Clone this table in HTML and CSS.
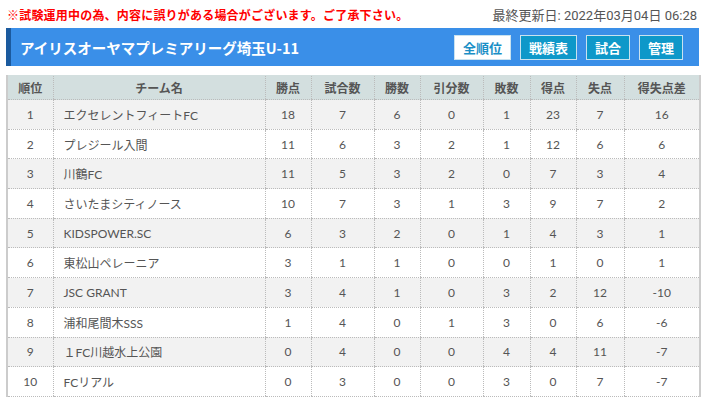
FILE: index.html
```html
<!DOCTYPE html>
<html lang="ja">
<head>
<meta charset="utf-8">
<link rel="stylesheet" href="styles.css">
</head>
<body>
<div class="page">
  <div class="topline">
    <p class="notice">※試験運用中の為、内容に誤りがある場合がございます。ご了承下さい。</p>
    <p class="updated">最終更新日: 2022年03月04日 06:28</p>
  </div>
  <div class="titlebar">
    <h1 class="title">アイリスオーヤマプレミアリーグ埼玉U-11</h1>
    <nav class="tabs">
      <span class="tab active">全順位</span>
      <span class="tab">戦績表</span>
      <span class="tab">試合</span>
      <span class="tab">管理</span>
    </nav>
  </div>
  <table class="standings">
    <colgroup>
      <col class="c-rank"><col class="c-name"><col class="c-pts"><col class="c-gp"><col class="c-w"><col class="c-d"><col class="c-l"><col class="c-gf"><col class="c-ga"><col class="c-gd">
    </colgroup>
    <thead>
      <tr><th>順位</th><th>チーム名</th><th>勝点</th><th>試合数</th><th>勝数</th><th>引分数</th><th>敗数</th><th>得点</th><th>失点</th><th>得失点差</th></tr>
    </thead>
    <tbody>
      <tr><td>1</td><td class="name">エクセレントフィートFC</td><td>18</td><td>7</td><td>6</td><td>0</td><td>1</td><td>23</td><td>7</td><td>16</td></tr>
      <tr><td>2</td><td class="name">プレジール入間</td><td>11</td><td>6</td><td>3</td><td>2</td><td>1</td><td>12</td><td>6</td><td>6</td></tr>
      <tr><td>3</td><td class="name">川鶴FC</td><td>11</td><td>5</td><td>3</td><td>2</td><td>0</td><td>7</td><td>3</td><td>4</td></tr>
      <tr><td>4</td><td class="name">さいたまシティノース</td><td>10</td><td>7</td><td>3</td><td>1</td><td>3</td><td>9</td><td>7</td><td>2</td></tr>
      <tr><td>5</td><td class="name">KIDSPOWER.SC</td><td>6</td><td>3</td><td>2</td><td>0</td><td>1</td><td>4</td><td>3</td><td>1</td></tr>
      <tr><td>6</td><td class="name">東松山ペレーニア</td><td>3</td><td>1</td><td>1</td><td>0</td><td>0</td><td>1</td><td>0</td><td>1</td></tr>
      <tr><td>7</td><td class="name">JSC GRANT</td><td>3</td><td>4</td><td>1</td><td>0</td><td>3</td><td>2</td><td>12</td><td>-10</td></tr>
      <tr><td>8</td><td class="name">浦和尾間木SSS</td><td>1</td><td>4</td><td>0</td><td>1</td><td>3</td><td>0</td><td>6</td><td>-6</td></tr>
      <tr><td>9</td><td class="name">１FC川越水上公園</td><td>0</td><td>4</td><td>0</td><td>0</td><td>4</td><td>4</td><td>11</td><td>-7</td></tr>
      <tr><td>10</td><td class="name">FCリアル</td><td>0</td><td>3</td><td>0</td><td>0</td><td>3</td><td>0</td><td>7</td><td>-7</td></tr>
    </tbody>
  </table>
</div>
</body>
</html>
```
FILE: styles.css
```css
* { box-sizing: border-box; }
html, body { margin: 0; padding: 0; background: #fff; }
body {
  font-family: Lato, "Noto Sans CJK JP", sans-serif;
  color: #555;
}
.page { padding: 0 6px; }
.topline {
  display: flex;
  justify-content: space-between;
  align-items: center;
  height: 28px;
  padding: 0 2px 0 1px;
}
.notice {
  margin: 0;
  color: #f00;
  font-weight: bold;
  font-size: 12px;
  letter-spacing: 0.2px;
}
.updated {
  margin: 0;
  color: #555;
  font-size: 13px;
  font-family: Roboto, "Noto Sans CJK JP", sans-serif;
}
.titlebar {
  display: flex;
  align-items: center;
  justify-content: space-between;
  height: 38px;
  background: #3a8fe8;
  border-left: 5px solid #1b5a9e;
  padding: 0 16px 0 9px;
}
.title {
  margin: 0;
  color: #fff;
  font-size: 14.5px;
  font-weight: bold;
  font-family: "Noto Sans CJK JP", sans-serif;
}
.tabs { display: flex; gap: 9px; }
.tab {
  height: 25px;
  display: flex;
  align-items: center;
  padding: 0 8px;
  font-size: 13px;
  font-weight: bold;
  color: #fff;
  background: #0e98c9;
  border: 1px solid #c9e2ef;
  font-family: "Noto Sans CJK JP", sans-serif;
}
.tab.active { background: #fff; color: #1b8fc6; }
.standings {
  margin-top: 9px;
  width: 100%;
  border-collapse: collapse;
  table-layout: fixed;
  font-size: 12px;
  border-left: 2px solid #ccc;
  border-right: 2px solid #ccc;
  border-top: 1px solid #d3dfdf;
}
.c-rank { width: 46px; }
.c-name { width: 212px; }
.c-pts { width: 46px; }
.c-gp { width: 63px; }
.c-w { width: 46px; }
.c-d { width: 63px; }
.c-l { width: 47px; }
.c-gf { width: 46px; }
.c-ga { width: 48px; }
.c-gd { width: 76px; }
.standings th {
  background: #d3dfdf;
  height: 24px;
  font-weight: bold;
  font-size: 12px;
  color: #555;
  border-left: 1px dotted #bbb;
  border-bottom: 1px dotted #bbb;
  padding: 0;
  font-family: "Noto Sans CJK JP", sans-serif;
}
.standings td {
  height: 29.7px;
  text-align: center;
  padding: 0;
  border-left: 1px dotted #bbb;
  border-bottom: 1px dotted #bbb;
}
.standings th:first-child, .standings td:first-child { border-left: none; }
.standings td.name { text-align: left; padding-left: 10px; }
.standings tbody tr:nth-child(odd) td { background: #f2f2f2; }
```
